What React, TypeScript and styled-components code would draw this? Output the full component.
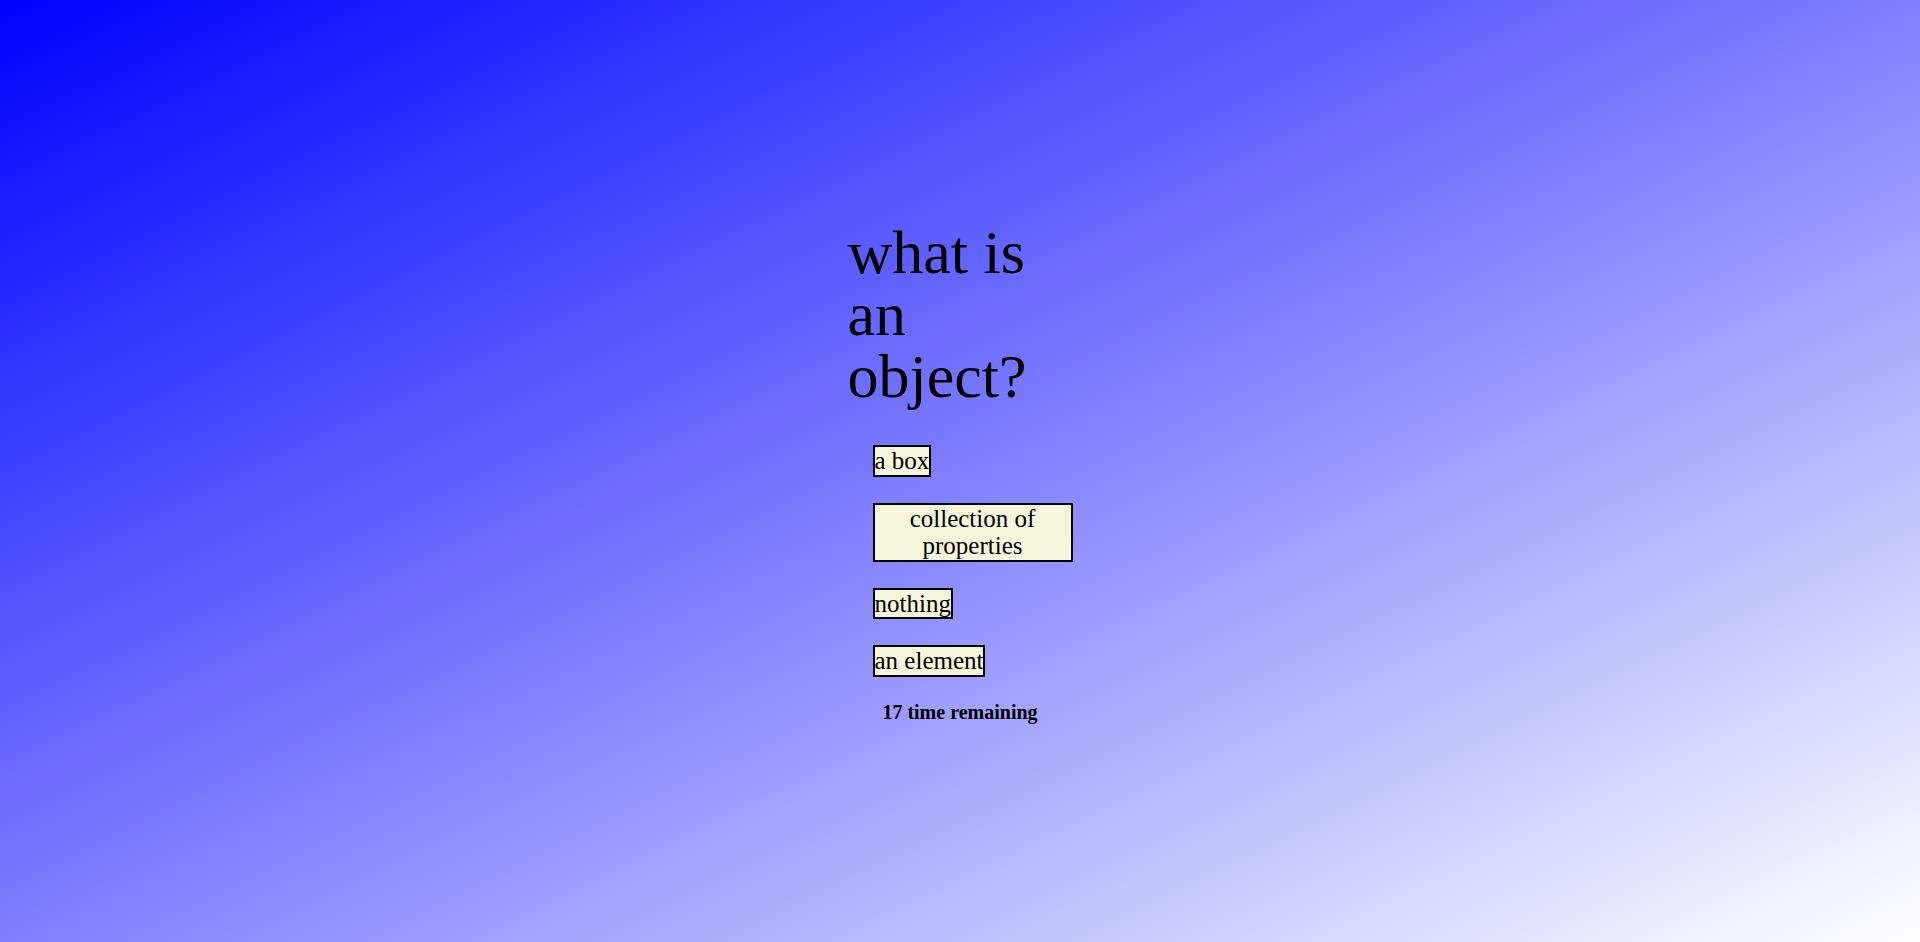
import styled, { createGlobalStyle } from "styled-components";

const GlobalStyle = createGlobalStyle`
  html, body {
    margin: 0;
    padding: 0;
  }
  body {
    font-family: "Liberation Serif", "Times New Roman", serif;
  }
`;

const Page = styled.main`
  min-height: 100vh;
  display: flex;
  align-items: center;
  justify-content: center;
  background: linear-gradient(to bottom right, #0000ff, #ffffff);
`;

const Quiz = styled.section`
  width: 225px;
  padding-top: 3px;
`;

const Question = styled.h1`
  margin: 0;
  font-size: 62px;
  line-height: 62px;
  font-weight: normal;
  color: #000;
`;

const Answers = styled.div`
  display: flex;
  flex-direction: column;
  align-items: flex-start;
  gap: 26px;
  margin-top: 38px;
  padding-left: 25px;
`;

const Answer = styled.button`
  font-family: "Liberation Serif", "Times New Roman", serif;
  font-size: 25px;
  line-height: 27.5px;
  color: #000;
  background: #f5f5dc;
  border: 2px solid #000;
  padding: 0;
  cursor: pointer;
`;

const Timer = styled.h3`
  margin: 24px 0 0;
  font-size: 20px;
  font-weight: bold;
  text-align: center;
`;

const answers = ["a box", "collection of properties", "nothing", "an element"];

const App = () => {
  return (
    <>
      <GlobalStyle />
      <Page>
        <Quiz>
          <Question>what is an object?</Question>
          <Answers>
            {answers.map((a) => (
              <Answer key={a}>{a}</Answer>
            ))}
          </Answers>
          <Timer>17 time remaining</Timer>
        </Quiz>
      </Page>
    </>
  );
};

export default App;
